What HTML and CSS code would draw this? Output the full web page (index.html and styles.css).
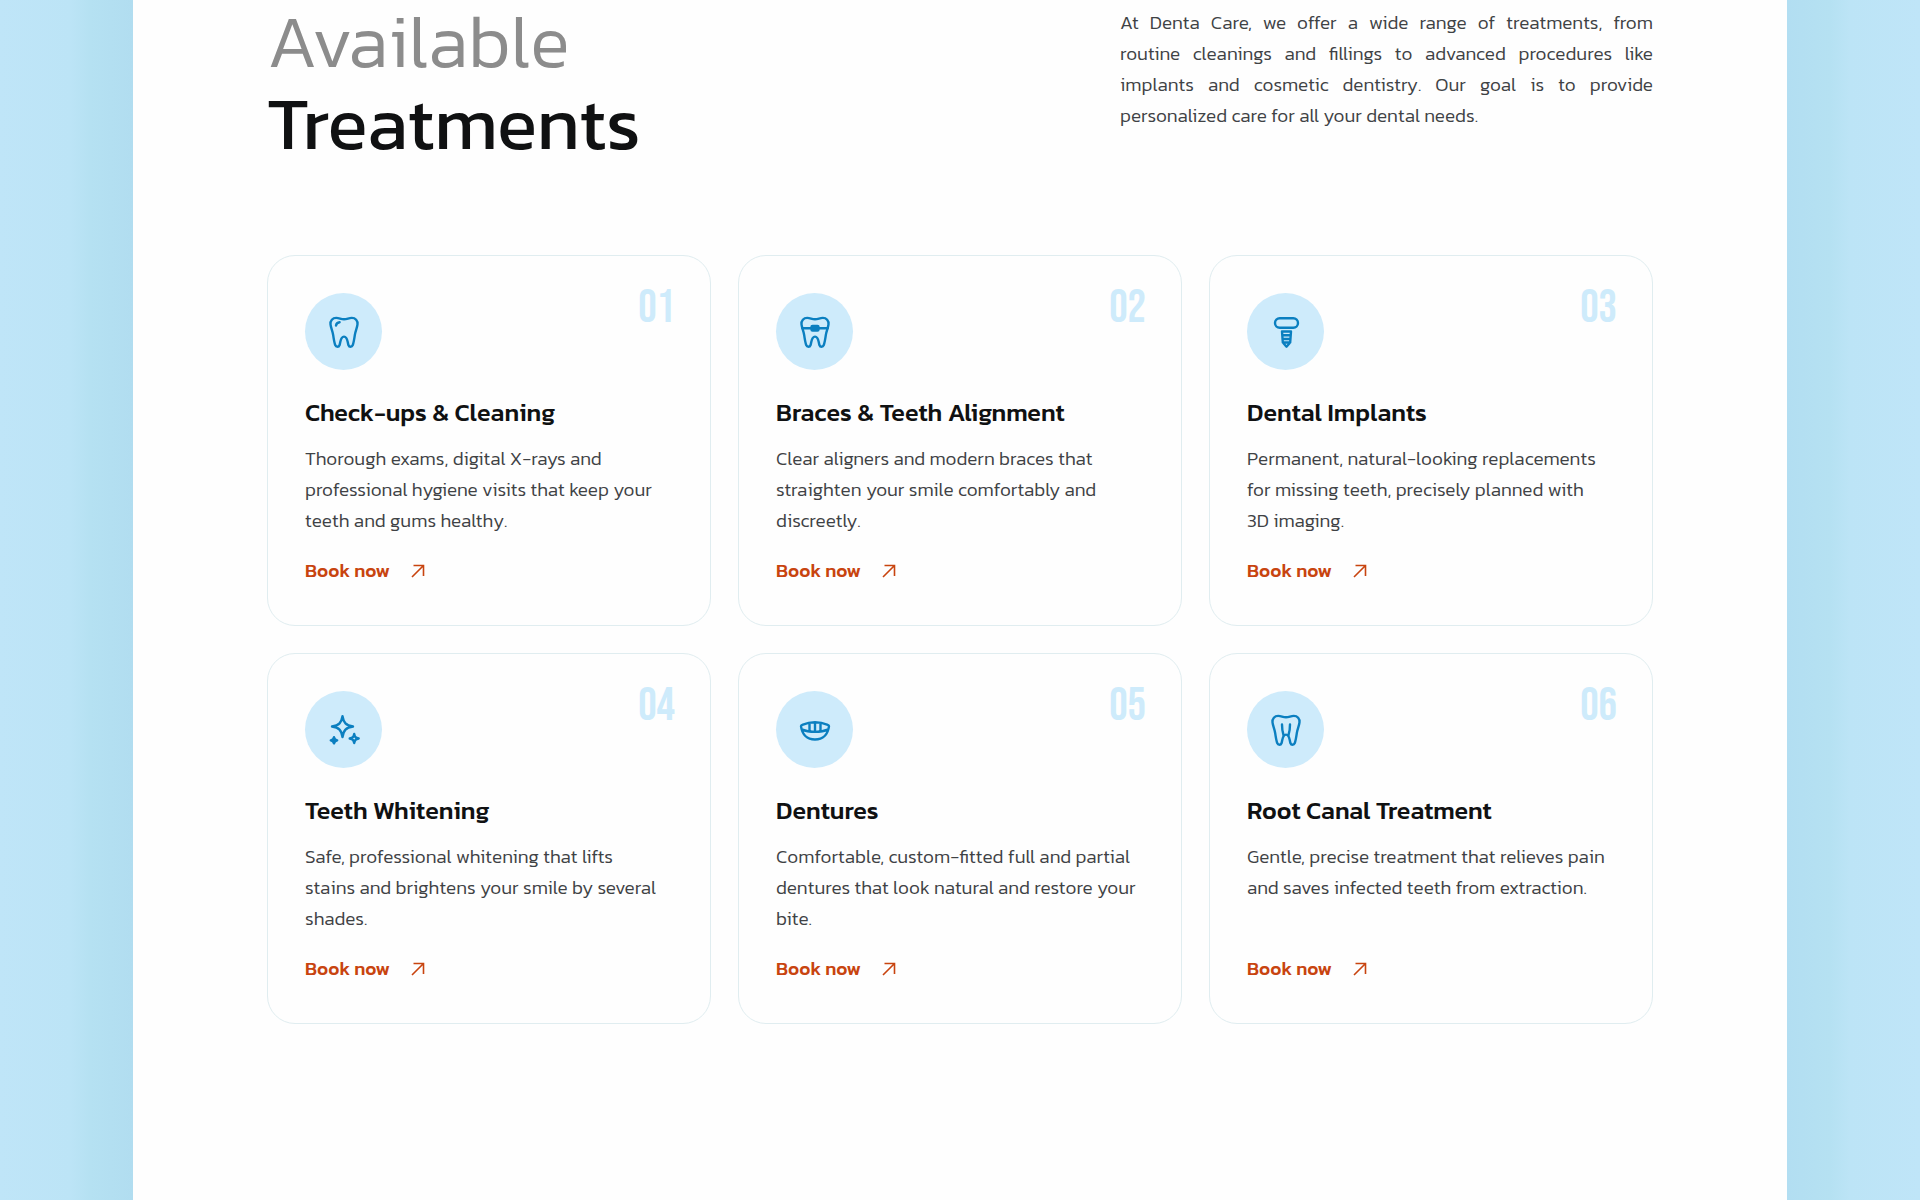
FILE: index.html
```
<!DOCTYPE html>
<html lang="en">
<head>
<meta charset="utf-8">
<meta name="viewport" content="width=device-width, initial-scale=1">
<title>Denta Care – Available Treatments</title>
<link rel="stylesheet" href="styles.css">
</head>
<body>
<svg class="sprite" aria-hidden="true">
  <symbol id="tooth" viewBox="0 0 36 36">
    <path d="M18 5.300C14.800 5.300 13.300 3.900 10.200 3.900C6.600 3.900 4.100 6.700 4.500 10.400C4.900 13.900 6.500 16.900 7.100 20.700C7.700 24.900 8.200 28.400 9.200 31C10.100 33.300 12.800 33.300 13.600 31C14.600 28.200 14.200 22.600 18 22.600S21.400 28.200 22.400 31C23.200 33.300 25.900 33.300 26.800 31C27.800 28.400 28.300 24.900 28.900 20.700C29.500 16.900 31.100 13.900 31.500 10.400C31.900 6.700 29.400 3.900 25.800 3.900C22.700 3.900 21.200 5.300 18 5.300Z"/>
  </symbol>
  <symbol id="arrow" viewBox="0 0 20 20"><path d="M4 16 15.500 4.500M5.500 4.500h10v10.500"/></symbol>
</svg>
<main class="page">
  <section class="treatments">
    <header class="intro">
      <h2 class="heading"><span class="heading-light">Available</span> <span class="heading-strong">Treatments</span></h2>
      <p class="lead">At Denta Care, we offer a wide range of treatments, from routine&nbsp;cleanings and fillings to advanced procedures like implants and cosmetic dentistry. Our goal is to provide personalized care for all your dental needs.</p>
    </header>

    <div class="cards">
      <article class="card">
        <div class="card-top">
          <span class="badge"><svg class="icon" viewBox="0 0 36 36"><use href="#tooth"/><path d="M10 11.500C10.300 9.600 11.500 8.400 13.600 8.200"/></svg></span>
          <span class="number">01</span>
        </div>
        <h3 class="title">Check-ups &amp; Cleaning</h3>
        <p class="text">Thorough exams, digital X-rays and professional hygiene visits that keep your teeth and gums healthy.</p>
        <a class="book" href="#book">Book now <svg class="arrow"><use href="#arrow"/></svg></a>
      </article>

      <article class="card">
        <div class="card-top">
          <span class="badge"><svg class="icon" viewBox="0 0 36 36"><use href="#tooth"/><path d="M5.500 14.300H30.500"/><rect class="solid" x="14.500" y="12" width="7" height="4.600" rx="1"/></svg></span>
          <span class="number">02</span>
        </div>
        <h3 class="title">Braces &amp; Teeth Alignment</h3>
        <p class="text">Clear aligners and modern braces that straighten your smile comfortably and discreetly.</p>
        <a class="book" href="#book">Book now <svg class="arrow"><use href="#arrow"/></svg></a>
      </article>

      <article class="card">
        <div class="card-top">
          <span class="badge"><svg class="icon" viewBox="0 0 36 36"><rect x="7" y="4.300" width="23" height="9.400" rx="4.700"/><path d="M14 17.500h9L22.200 28.500 18.500 32.700 14.800 28.500ZM14.500 21.300h8M14.700 25h7.600M15 28.500h7"/></svg></span>
          <span class="number">03</span>
        </div>
        <h3 class="title">Dental Implants</h3>
        <p class="text">Permanent, natural-looking replacements for missing teeth, precisely planned with 3D imaging.</p>
        <a class="book" href="#book">Book now <svg class="arrow"><use href="#arrow"/></svg></a>
      </article>

      <article class="card">
        <div class="card-top">
          <span class="badge"><svg class="icon" viewBox="0 0 36 36"><path d="M16.500 4.300C17.600 10.800 19.800 13.300 27 14.500C19.800 15.700 17.600 18.200 16.500 25C15.400 18.200 13.200 15.700 6 14.500C13.200 13.300 15.400 10.800 16.500 4.300Z"/><path class="solid" d="M8 25.200C8.500 27.300 9 27.700 11.200 28.300C9 28.900 8.500 29.300 8 31.400C7.500 29.300 7 28.900 4.800 28.300C7 27.700 7.500 27.300 8 25.200Z"/><path d="M28.200 22C28.900 25.200 29.500 25.800 32.700 26.500C29.500 27.200 28.900 27.800 28.200 31C27.500 27.800 26.900 27.200 23.700 26.500C26.900 25.800 27.500 25.200 28.200 22Z"/></svg></span>
          <span class="number">04</span>
        </div>
        <h3 class="title">Teeth Whitening</h3>
        <p class="text">Safe, professional whitening that lifts stains and brightens your smile by several shades.</p>
        <a class="book" href="#book">Book now <svg class="arrow"><use href="#arrow"/></svg></a>
      </article>

      <article class="card">
        <div class="card-top">
          <span class="badge"><svg class="icon" viewBox="0 0 36 36"><path d="M4 14.200C4 13.400 4.500 13 5.200 12.800C13 9.700 23 9.700 30.800 12.800C31.500 13 32 13.400 32 14.200C31 22.500 26 27.500 18 27.500S5 22.500 4 14.200ZM4.700 17.300C12 20.700 24 20.700 31.300 17.300M12.500 11V19.300M18 10.500V19.800M23.500 11V19.300"/></svg></span>
          <span class="number">05</span>
        </div>
        <h3 class="title">Dentures</h3>
        <p class="text">Comfortable, custom-fitted full and partial dentures that look natural and restore your bite.</p>
        <a class="book" href="#book">Book now <svg class="arrow"><use href="#arrow"/></svg></a>
      </article>

      <article class="card">
        <div class="card-top">
          <span class="badge"><svg class="icon" viewBox="0 0 36 36"><use href="#tooth"/><path d="M14 12.500C14 16.500 14.400 19.800 15.500 23M22 12.500C22 16.500 21.600 19.800 20.500 23"/></svg></span>
          <span class="number">06</span>
        </div>
        <h3 class="title">Root Canal Treatment</h3>
        <p class="text">Gentle, precise treatment that relieves pain and saves infected teeth from extraction.</p>
        <a class="book" href="#book">Book now <svg class="arrow"><use href="#arrow"/></svg></a>
      </article>
    </div>
  </section>
</main>
</body>
</html>
```
FILE: styles.css
```
*{box-sizing:border-box}

body{
  margin:0;
  padding:0 133px;
  min-height:100vh;
  display:flex;
  font-family:Kanit,"Noto Sans",sans-serif;
  font-weight:300;
  color:#3f4245;
  background:
    linear-gradient(to right,#bfe5f8 0,#bce4f6 70px,#b5e1f2 90px,#b1ddf0 133px) left / 133px 100% no-repeat,
    linear-gradient(to left,#bfe5f8 0,#bce4f6 70px,#b5e1f2 90px,#b2def2 133px) right / 133px 100% no-repeat,
    #b1ddf0;
}

.sprite{position:absolute;width:0;height:0}

.page{flex:1;background:#fefefe}

.treatments{padding:0 134px 176px}

.intro{
  display:flex;
  justify-content:space-between;
  align-items:flex-start;
  gap:40px;
  margin-bottom:91px;
}

.heading{margin:0;font-size:74px;line-height:82px;font-weight:400}
.heading span{display:block}
.heading-light{font-weight:300;color:#8c8c8c}
.heading-strong{color:#101112}

.lead{
  width:533px;
  margin:0;
  padding-top:7px;
  font-size:19px;
  line-height:31px;
  text-align:justify;
}

.cards{
  display:grid;
  grid-template-columns:repeat(3,1fr);
  gap:27px;
}

.card{
  display:flex;
  flex-direction:column;
  padding:30px 35px 39px 37px;
  border:1px solid #e0edf0;
  border-radius:28px;
}

.card-top{display:flex;justify-content:space-between;align-items:flex-start}

.badge{
  display:flex;
  align-items:center;
  justify-content:center;
  width:77px;
  height:77px;
  margin-top:7px;
  border-radius:50%;
  background:#ceebfb;
}

.icon{
  width:36px;
  height:36px;
  fill:none;
  stroke:#0b7fc0;
  stroke-width:2.4;
  stroke-linecap:round;
  stroke-linejoin:round;
}
.icon .solid{fill:#0b7fc0}

.number{
  font-family:"Bebas Neue","Roboto Condensed",sans-serif;
  font-size:46px;
  line-height:46px;
  font-weight:400;
  color:#ceebfb;
}

.title{
  margin:24px 0 13px;
  font-size:25px;
  line-height:36px;
  font-weight:500;
  color:#101112;
}

.text{
  flex:1;
  margin:0 0 19px;
  padding-right:9px;
  font-size:19px;
  line-height:31px;
}

.book{
  display:flex;
  align-items:center;
  align-self:flex-start;
  gap:18px;
  font-size:19px;
  line-height:31px;
  font-weight:500;
  color:#c8440f;
  text-decoration:none;
}

.arrow{
  width:20px;
  height:20px;
  fill:none;
  stroke:currentColor;
  stroke-width:1.6;
}
```
